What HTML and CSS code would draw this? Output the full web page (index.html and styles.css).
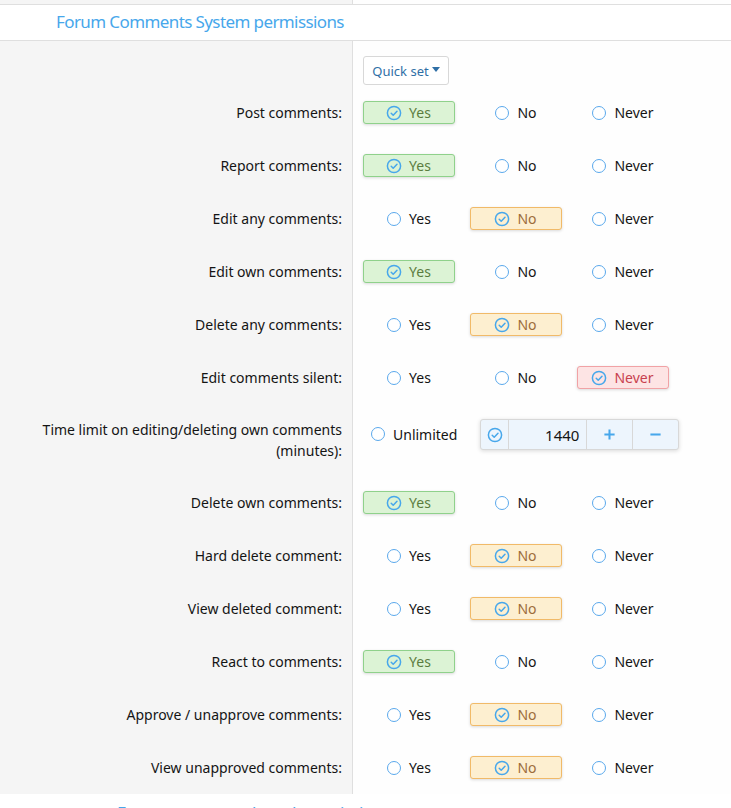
FILE: index.html
```html
<!DOCTYPE html>
<html>
<head>
<meta charset="utf-8">
<link rel="stylesheet" href="styles.css">
</head>
<body>
<div class="strip"><div class="strip-left"></div><div class="strip-right"></div></div>
<h3 class="section-header"><span>Forum Comments System permissions</span></h3>
<div class="form">
  <div class="row row-quick">
    <div class="label"></div>
    <div class="control"><button class="quickset">Quick set<span class="caret"></span></button></div>
  </div>

  <div class="row"><div class="label">Post comments:</div><div class="control choices">
    <span class="opt sel-yes"><svg class="ico" viewBox="0 0 16 16"><circle cx="8" cy="8" r="6.6"/><path d="M5.2 8.2l2 2 3.8-4"/></svg>Yes</span>
    <span class="opt"><i class="radio"></i>No</span>
    <span class="opt"><i class="radio"></i>Never</span>
  </div></div>

  <div class="row"><div class="label">Report comments:</div><div class="control choices">
    <span class="opt sel-yes"><svg class="ico" viewBox="0 0 16 16"><circle cx="8" cy="8" r="6.6"/><path d="M5.2 8.2l2 2 3.8-4"/></svg>Yes</span>
    <span class="opt"><i class="radio"></i>No</span>
    <span class="opt"><i class="radio"></i>Never</span>
  </div></div>

  <div class="row"><div class="label">Edit any comments:</div><div class="control choices">
    <span class="opt"><i class="radio"></i>Yes</span>
    <span class="opt sel-no"><svg class="ico" viewBox="0 0 16 16"><circle cx="8" cy="8" r="6.6"/><path d="M5.2 8.2l2 2 3.8-4"/></svg>No</span>
    <span class="opt"><i class="radio"></i>Never</span>
  </div></div>

  <div class="row"><div class="label">Edit own comments:</div><div class="control choices">
    <span class="opt sel-yes"><svg class="ico" viewBox="0 0 16 16"><circle cx="8" cy="8" r="6.6"/><path d="M5.2 8.2l2 2 3.8-4"/></svg>Yes</span>
    <span class="opt"><i class="radio"></i>No</span>
    <span class="opt"><i class="radio"></i>Never</span>
  </div></div>

  <div class="row"><div class="label">Delete any comments:</div><div class="control choices">
    <span class="opt"><i class="radio"></i>Yes</span>
    <span class="opt sel-no"><svg class="ico" viewBox="0 0 16 16"><circle cx="8" cy="8" r="6.6"/><path d="M5.2 8.2l2 2 3.8-4"/></svg>No</span>
    <span class="opt"><i class="radio"></i>Never</span>
  </div></div>

  <div class="row"><div class="label">Edit comments silent:</div><div class="control choices">
    <span class="opt"><i class="radio"></i>Yes</span>
    <span class="opt"><i class="radio"></i>No</span>
    <span class="opt sel-never"><svg class="ico" viewBox="0 0 16 16"><circle cx="8" cy="8" r="6.6"/><path d="M5.2 8.2l2 2 3.8-4"/></svg>Never</span>
  </div></div>

  <div class="row row-time"><div class="label">Time limit on editing/deleting own comments<br>(minutes):</div><div class="control timelimit">
    <span class="opt-unl"><i class="radio"></i>Unlimited</span>
    <div class="inputgroup">
      <span class="ig-check"><svg class="ico" viewBox="0 0 16 16"><circle cx="8" cy="8" r="6.6"/><path d="M5.2 8.2l2 2 3.8-4"/></svg></span>
      <span class="ig-num">1440</span>
      <span class="ig-btn"><svg viewBox="0 0 14 14"><path d="M7 1.5v11M1.5 7h11"/></svg></span>
      <span class="ig-btn"><svg viewBox="0 0 14 14"><path d="M1.5 7h11"/></svg></span>
    </div>
  </div></div>

  <div class="row"><div class="label">Delete own comments:</div><div class="control choices">
    <span class="opt sel-yes"><svg class="ico" viewBox="0 0 16 16"><circle cx="8" cy="8" r="6.6"/><path d="M5.2 8.2l2 2 3.8-4"/></svg>Yes</span>
    <span class="opt"><i class="radio"></i>No</span>
    <span class="opt"><i class="radio"></i>Never</span>
  </div></div>

  <div class="row"><div class="label">Hard delete comment:</div><div class="control choices">
    <span class="opt"><i class="radio"></i>Yes</span>
    <span class="opt sel-no"><svg class="ico" viewBox="0 0 16 16"><circle cx="8" cy="8" r="6.6"/><path d="M5.2 8.2l2 2 3.8-4"/></svg>No</span>
    <span class="opt"><i class="radio"></i>Never</span>
  </div></div>

  <div class="row"><div class="label">View deleted comment:</div><div class="control choices">
    <span class="opt"><i class="radio"></i>Yes</span>
    <span class="opt sel-no"><svg class="ico" viewBox="0 0 16 16"><circle cx="8" cy="8" r="6.6"/><path d="M5.2 8.2l2 2 3.8-4"/></svg>No</span>
    <span class="opt"><i class="radio"></i>Never</span>
  </div></div>

  <div class="row"><div class="label">React to comments:</div><div class="control choices">
    <span class="opt sel-yes"><svg class="ico" viewBox="0 0 16 16"><circle cx="8" cy="8" r="6.6"/><path d="M5.2 8.2l2 2 3.8-4"/></svg>Yes</span>
    <span class="opt"><i class="radio"></i>No</span>
    <span class="opt"><i class="radio"></i>Never</span>
  </div></div>

  <div class="row"><div class="label">Approve / unapprove comments:</div><div class="control choices">
    <span class="opt"><i class="radio"></i>Yes</span>
    <span class="opt sel-no"><svg class="ico" viewBox="0 0 16 16"><circle cx="8" cy="8" r="6.6"/><path d="M5.2 8.2l2 2 3.8-4"/></svg>No</span>
    <span class="opt"><i class="radio"></i>Never</span>
  </div></div>

  <div class="row"><div class="label">View unapproved comments:</div><div class="control choices">
    <span class="opt"><i class="radio"></i>Yes</span>
    <span class="opt sel-no"><svg class="ico" viewBox="0 0 16 16"><circle cx="8" cy="8" r="6.6"/><path d="M5.2 8.2l2 2 3.8-4"/></svg>No</span>
    <span class="opt"><i class="radio"></i>Never</span>
  </div></div>
</div>
<h3 class="section-header next"><span>Forum comment thread permissions</span></h3>
</body>
</html>
```

FILE: styles.css
```css
html, body {
  margin: 0;
  padding: 0;
  background: #fefefe;
  font-family: "Noto Sans", "Open Sans", sans-serif;
  color: #141414;
  font-size: 14px;
  overflow: hidden;
}

.strip {
  display: grid;
  grid-template-columns: 353px 1fr;
  height: 4px;
  border-bottom: 1px solid #dfdfdf;
}
.strip-left {
  background: #f5f5f5;
  border-right: 1px solid #dfdfdf;
}

.section-header {
  margin: 0;
  height: 36px;
  box-sizing: border-box;
  padding: 5px 0 0 56px;
  font-weight: normal;
  font-size: 17px;
  letter-spacing: -0.6px;
  color: #47a7eb;
  border-bottom: 1px solid #dfdfdf;
  background: #fff;
}
.section-header.next {
  padding-left: 117px;
  padding-top: 7px;
}

.form {
  display: flex;
  flex-direction: column;
}

.row {
  display: grid;
  grid-template-columns: 353px 1fr;
}
.label {
  background: #f5f5f5;
  border-right: 1px solid #dfdfdf;
  text-align: right;
  padding: 16px 10px 16px 0;
  line-height: 21px;
}
.row-time .label {
  padding: 15px 10px 15px 0;
}
.control {
  padding: 15px 0 15px 10px;
}
.row-quick .label { padding: 0; }
.row-quick .control { padding: 15px 0 0 10px; height: 30px; box-sizing: content-box; }

.quickset {
  font-family: inherit;
  font-size: 13px;
  color: #2f6fa6;
  background: #fff;
  border: 1px solid #d8d8d8;
  border-radius: 3px;
  height: 29px;
  width: 86px;
  padding: 0;
  display: inline-flex;
  align-items: center;
  justify-content: center;
  gap: 3px;
}
.caret {
  width: 0;
  height: 0;
  border-left: 4px solid transparent;
  border-right: 4px solid transparent;
  border-top: 5px solid #2f6fa6;
  margin-top: -2px;
}

.choices {
  display: flex;
  gap: 15px;
}
.opt {
  width: 92px;
  height: 23px;
  box-sizing: border-box;
  display: inline-flex;
  align-items: center;
  justify-content: center;
  gap: 8px;
  border: 1px solid transparent;
  border-radius: 3px;
}
.radio {
  display: inline-block;
  width: 14px;
  height: 14px;
  box-sizing: border-box;
  border: 1.7px solid #5aa9ec;
  border-radius: 50%;
  background: #fff;
}
.ico {
  width: 16px;
  height: 16px;
  fill: none;
  stroke: #47a7eb;
  stroke-width: 1.5;
  stroke-linecap: round;
  stroke-linejoin: round;
  margin: 0 -1px;
}
.sel-yes {
  background: #dcf3d5;
  border-color: #8fd18b;
  color: #5b7d3f;
  box-shadow: 0 1px 3px rgba(0,0,0,0.15);
}
.sel-no {
  background: #fdefd0;
  border-color: #f1ba68;
  color: #9c6c3a;
  box-shadow: 0 1px 3px rgba(0,0,0,0.15);
}
.sel-never {
  background: #fde4e4;
  border-color: #f1a2a5;
  color: #c8404e;
  box-shadow: 0 1px 3px rgba(0,0,0,0.15);
}

.timelimit {
  display: flex;
  align-items: flex-start;
  gap: 23px;
}
.opt-unl {
  display: inline-flex;
  align-items: center;
  gap: 8px;
  padding-left: 8px;
  height: 30px;
}
.inputgroup {
  display: flex;
  height: 31px;
  box-sizing: border-box;
  border: 1px solid #d8d8d8;
  border-radius: 3px;
  background: #edf5fd;
  box-shadow: 0 1px 4px rgba(0,0,0,0.15);
}
.inputgroup > span {
  display: flex;
  align-items: center;
  justify-content: center;
}
.ig-check {
  width: 27px;
  border-right: 1px solid #d8d8d8;
}
.ig-num {
  width: 78px;
  justify-content: flex-end !important;
  padding-right: 7px;
  box-sizing: border-box;
  border-right: 1px solid #d8d8d8;
  font-size: 15px;
}
.ig-btn {
  width: 45px;
  border-right: 1px solid #d8d8d8;
}
.ig-btn:last-child { border-right: none; }
.ig-btn svg {
  width: 13px;
  height: 13px;
  stroke: #47a7eb;
  stroke-width: 2.2;
}
```
